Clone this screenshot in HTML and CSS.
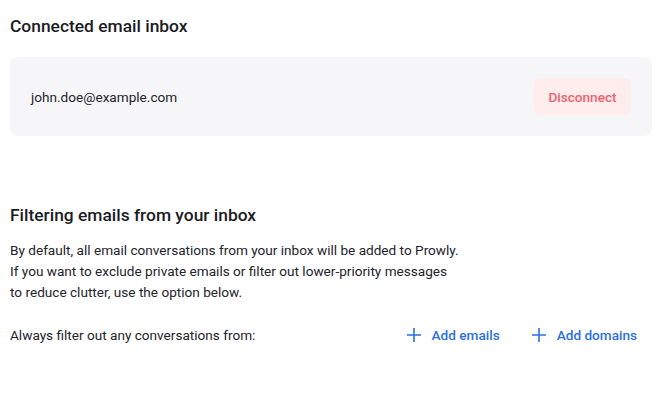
FILE: index.html
```html
<!DOCTYPE html>
<html lang="en">
<head>
  <meta charset="UTF-8">
  <title>Inbox settings</title>
  <link rel="stylesheet" href="styles.css">
</head>
<body>
  <div class="settings">
    <section class="connected">
      <h2>Connected email inbox</h2>
      <div class="inbox-card">
        <span class="inbox-email">john.doe@example.com</span>
        <button class="btn-disconnect">Disconnect</button>
      </div>
    </section>

    <!-- Filtering -->
    <section class="filtering">
      <h2>Filtering emails from your inbox</h2>
      <p class="intro">
        By default, all email conversations from your inbox will be added to Prowly.<br>
        If you want to exclude private emails or filter out lower-priority messages<br>
        to reduce clutter, use the option below.
      </p>
      <div class="filter-row">
        <span>Always filter out any conversations from:</span>
        <div class="filter-actions">
          <button class="btn-add">
            <svg width="14" height="14" viewBox="0 0 14 14"><path d="M7 0v14M0 7h14" stroke="currentColor" stroke-width="1.6" fill="none"/></svg>
            Add emails
          </button>
          <button class="btn-add">
            <svg width="14" height="14" viewBox="0 0 14 14"><path d="M7 0v14M0 7h14" stroke="currentColor" stroke-width="1.6" fill="none"/></svg>
            Add domains
          </button>
        </div>
      </div>
    </section>
  </div>
</body>
</html>
```

FILE: styles.css
```css
body {
  margin: 0;
  font-family: Roboto, "Liberation Sans", sans-serif;
  color: #24242c;
  background: #fff;
}
.settings {
  padding: 14px 10px 0;
}
h2 {
  font-size: 17.4px;
  font-weight: 500;
  line-height: 24px;
  color: #1b1b24;
  margin: 0;
}
.inbox-card {
  margin-top: 19px;
  height: 79px;
  background: #f6f6f8;
  border-radius: 8px;
  padding: 0 21px;
  display: flex;
  align-items: center;
  justify-content: space-between;
  font-size: 13.6px;
}
.btn-disconnect {
  font-family: inherit;
  font-size: 13.6px;
  font-weight: 500;
  color: #f0626a;
  background: #ffeded;
  border: none;
  border-radius: 6px;
  width: 97px;
  height: 37px;
  cursor: pointer;
}
.filtering {
  margin-top: 67px;
}
.intro {
  font-size: 13.6px;
  line-height: 20.8px;
  margin: 13px 0 0;
}
.filter-row {
  display: flex;
  align-items: center;
  justify-content: space-between;
  margin-top: 25px;
  font-size: 13.6px;
  padding-right: 15px;
}
.filter-actions {
  display: flex;
  gap: 32px;
}
.btn-add {
  display: flex;
  align-items: center;
  gap: 11px;
  font-family: inherit;
  font-size: 13.6px;
  font-weight: 500;
  color: #2c6fe6;
  background: none;
  border: none;
  padding: 0;
  cursor: pointer;
}
```
